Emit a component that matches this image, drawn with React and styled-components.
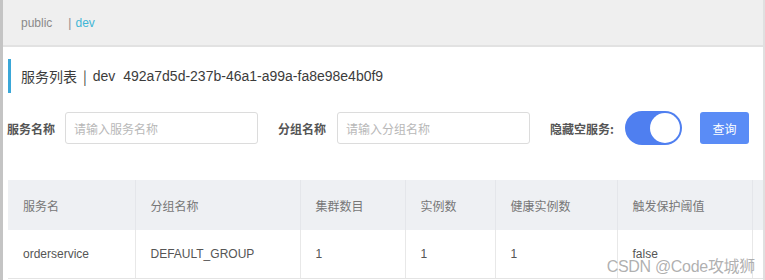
import React from 'react';
import styled, { createGlobalStyle } from 'styled-components';

const GlobalStyle = createGlobalStyle`
  html, body {
    margin: 0;
    padding: 0;
    background: #ffffff;
  }
  body {
    font-family: "Noto Sans CJK SC", "Liberation Sans", sans-serif;
  }
`;

const Page = styled.div`
  position: relative;
  width: 765px;
  height: 280px;
  box-sizing: border-box;
  border-left: 3px solid #c4c4c4;
  border-right: 2px solid #e0e0e0;
  overflow: hidden;
  background: #fff;
`;

const NamespaceBar = styled.div`
  display: flex;
  align-items: center;
  height: 45px;
  padding-left: 18px;
  background: #efefef;
  border-bottom: 2px solid #e2e2e2;
  font-family: "Liberation Sans", sans-serif;
  font-size: 12px;
`;

const Namespace = styled.span`
  color: ${p => (p.active ? '#3fb6d6' : '#8a8a8a')};
`;

const Divider = styled.span`
  color: #8a8a8a;
  margin: 0 4px 0 16px;
`;

const Title = styled.div`
  display: flex;
  align-items: center;
  margin: 12px 0 0 5px;
  height: 34px;
  padding-left: 10px;
  border-left: 3px solid #3aa7d8;
  font-size: 14px;
  color: #3c3c3c;
  gap: 6px;
`;

const TitleId = styled.span`
  font-family: "Liberation Sans", sans-serif;
  font-size: 14px;
`;

const FormRow = styled.div`
  display: flex;
  align-items: center;
  margin-top: 18px;
  padding-left: 4px;
`;

const Label = styled.label`
  font-size: 12px;
  font-weight: 700;
  color: #555;
  width: ${p => p.w}px;
`;

const Input = styled.input`
  box-sizing: border-box;
  width: 193px;
  height: 32px;
  border: 1px solid #dcdcdc;
  border-radius: 3px;
  padding: 0 8px;
  font-family: "Noto Sans CJK SC", sans-serif;
  font-size: 12px;
  color: #333;
  margin-right: 20px;
  outline: none;
  &::placeholder {
    color: #b8b8b8;
  }
`;

const Switch = styled.div`
  box-sizing: border-box;
  width: 57px;
  height: 34px;
  border-radius: 17px;
  background: #4f7ff0;
  display: flex;
  align-items: center;
  justify-content: flex-end;
  padding-right: 2px;
  margin-right: 18px;
`;

const Knob = styled.div`
  width: 30px;
  height: 30px;
  border-radius: 50%;
  background: #fff;
`;

const Button = styled.button`
  box-sizing: border-box;
  width: 49px;
  height: 32px;
  border: none;
  border-radius: 3px;
  background: #5a8cf6;
  color: #fff;
  font-family: "Noto Sans CJK SC", sans-serif;
  font-size: 12px;
`;

const Table = styled.table`
  margin: 35px 0 0 5px;
  border-collapse: collapse;
  width: 780px;
  table-layout: fixed;
  font-size: 12px;
  color: #666;
`;

const Th = styled.th`
  height: 48px;
  background: #eef0f3;
  font-weight: 400;
  text-align: left;
  padding-left: 15px;
  border-right: 1px solid #e4e6ea;
  color: #777;
`;

const Td = styled.td`
  height: 46px;
  padding-left: 15px;
  border-right: 1px solid #e8e8e8;
  border-bottom: 1px solid #e4e4e4;
  font-family: "Liberation Sans", "Noto Sans CJK SC", sans-serif;
  color: #555;
`;

const Watermark = styled.div`
  position: absolute;
  right: 8px;
  bottom: 3px;
  font-size: 16px;
  color: rgba(150, 150, 150, 0.75);
  font-family: "Liberation Sans", "Noto Sans CJK SC", sans-serif;
  letter-spacing: -0.3px;
`;

const columns = [
  { name: '服务名', w: 127 },
  { name: '分组名称', w: 165 },
  { name: '集群数目', w: 105 },
  { name: '实例数', w: 90 },
  { name: '健康实例数', w: 122 },
  { name: '触发保护阈值', w: 135 },
  { name: '', w: 36 },
];

const row = ['orderservice', 'DEFAULT_GROUP', '1', '1', '1', 'false', ''];

export default function App() {
  return (
    <Page>
      <GlobalStyle />
      <NamespaceBar>
        <Namespace>public</Namespace>
        <Divider>|</Divider>
        <Namespace active>dev</Namespace>
      </NamespaceBar>
      <Title>
        <span>服务列表</span>
        <span>|</span>
        <TitleId>dev&nbsp; 492a7d5d-237b-46a1-a99a-fa8e98e4b0f9</TitleId>
      </Title>
      <FormRow>
        <Label w={58}>服务名称</Label>
        <Input placeholder="请输入服务名称" />
        <Label w={59}>分组名称</Label>
        <Input placeholder="请输入分组名称" />
        <Label w={75}>隐藏空服务:</Label>
        <Switch>
          <Knob />
        </Switch>
        <Button>查询</Button>
      </FormRow>
      <Table>
        <colgroup>
          {columns.map((c, i) => (
            <col key={i} style={{ width: c.w }} />
          ))}
        </colgroup>
        <thead>
          <tr>
            {columns.map((c, i) => (
              <Th key={i}>{c.name}</Th>
            ))}
          </tr>
        </thead>
        <tbody>
          <tr>
            {row.map((v, i) => (
              <Td key={i}>{v}</Td>
            ))}
          </tr>
        </tbody>
      </Table>
      <Watermark>CSDN @Code攻城狮</Watermark>
    </Page>
  );
}
